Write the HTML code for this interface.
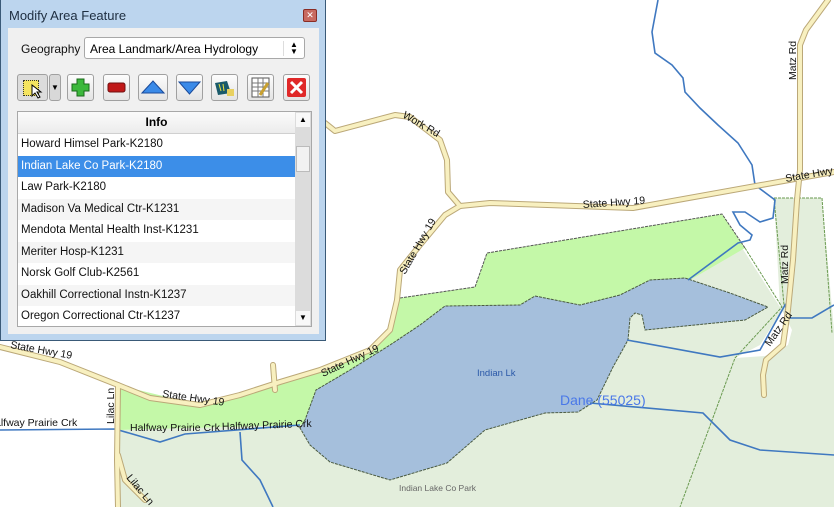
<!DOCTYPE html>
<html><head><meta charset="utf-8"><style>
body{margin:0;width:834px;height:507px;overflow:hidden;background:#fff;position:relative;font-family:"Liberation Sans",sans-serif}
svg.map{position:absolute;left:0;top:0}
.dlg{position:absolute;left:0;top:0;width:324px;height:340px;background:#bcd5ee;border:1px solid #3a5a78;border-top:none;box-sizing:content-box}
.title{position:absolute;left:8px;top:8px;font-size:13px;color:#1e2e40}
.close{position:absolute;left:302px;top:9px;width:12px;height:11px;background:#c86a60;border:1px solid #8a2c24;border-radius:2px;color:#fff;font-size:9px;line-height:11px;text-align:center}
.panel{position:absolute;left:7px;top:28px;width:311px;height:306px;background:#f0f0f0}
.lbl{position:absolute;left:13px;top:14px;font-size:12px;color:#111}
.combo{position:absolute;left:76px;top:9px;width:221px;height:22px;background:#fff;border:1px solid #a8a8a8;border-radius:3px;font-size:12px;line-height:22px;padding-left:5px;box-sizing:border-box}
.combo .ar{position:absolute;right:0;top:3px;width:20px;height:15px;border-left:1px solid #ddd;font-size:8px;line-height:7px;text-align:center}
.btn{position:absolute;top:46px;height:27px;width:27px;background:linear-gradient(#fdfdfd,#e4e4e4);border:1px solid #a0a0a0;border-radius:3px;box-sizing:border-box}
.table{position:absolute;left:9px;top:83px;width:295px;height:216px;background:#fff;border:1px solid #a8a8a8;box-sizing:border-box}
.hdr{position:absolute;left:0;top:0;width:277px;height:21px;background:linear-gradient(#fbfbfb,#ececec);border-bottom:1px solid #d0d0d0;font-size:12px;font-weight:bold;text-align:center;line-height:21px}
.row{position:absolute;left:0;width:277px;height:21.5px;font-size:11.5px;line-height:21px;padding-left:3px;box-sizing:border-box;color:#111}
.sb{position:absolute;left:277px;top:0;width:16px;height:214px;background:#dcdcdc}
</style></head><body>
<svg class="map" width="834" height="507" viewBox="0 0 834 507">
<polygon points="118,430 300,425 737,240 780,307 774,198 822,198 834,330 834,507 118,507" fill="#e3eedc"/>
<polygon points="782,310 792,330 788,345 765,356 735,358 760,345" fill="#fff"/>
<polygon points="400,298 475,287 487,253 722,214 745,248 690,280 300,425 118,430 118,385 200,405 280,382 370,350 392,325" fill="#c4f8a8"/>
<polyline points="400,298 475,287 487,253 722,214 745,248" fill="none" stroke="#555" stroke-width="1" stroke-dasharray="3,1"/>
<polygon points="300,428 305,420 316,390 350,370 390,345 420,325 445,306 520,305 535,296 555,300 580,305 620,295 650,280 685,278 730,293 768,307 745,320 645,330 642,315 635,313 630,318 628,340 613,367 597,400 578,412 545,413 485,430 447,463 390,480 330,462 310,445" fill="#a5bfdc" stroke="#4a5a40" stroke-width="1" stroke-dasharray="3,1"/>
<polyline points="745,248 782,307 735,358 680,507" fill="none" stroke="#6a9a50" stroke-width="1" stroke-dasharray="3,1"/>
<polyline points="774,198 822,198 832,333" fill="none" stroke="#6a9a50" stroke-width="1" stroke-dasharray="3,1"/>
<line x1="774" y1="198" x2="784" y2="305" stroke="#6a9a50" stroke-width="1" stroke-dasharray="3,1"/>
<g fill="none" stroke="#3f78c0" stroke-width="1.6">
<polyline points="658,0 652,32 655,53 672,65 683,78 685,92 700,108 718,125 738,143 752,165 755,185 775,200 773,218 760,222 745,212 733,212 740,225 752,235 750,240 738,243 688,280"/>
<polyline points="627,340 720,357 760,350 785,305 790,318 790,318"/>
<polyline points="785,318 812,318 834,305"/>
<polyline points="590,403 703,413 730,440 760,450 834,455"/>
<polyline points="0,430 115,429 160,442 185,434 300,425"/>
<polyline points="240,432 242,460 260,480 273,507"/>
</g>
<g fill="none" stroke-linecap="round" stroke-linejoin="round">
<g stroke="#bba878" stroke-width="6">
<polyline points="325,123 335,131 395,115 410,117 440,140 447,160 448,192 460,206"/>
<polyline points="460,206 490,203 633,208 834,172"/>
<polyline points="460,206 445,215 420,245 400,270 397,300 390,330 370,350 320,370 280,382 240,395 200,405 150,398 118,385 60,362 0,347"/>
<polyline points="828,0 806,30 800,45 800,170 797,200 793,260 788,310 783,345 766,360 763,375 764,395"/>
<polyline points="118,385 117,460 118,507"/>
<polyline points="118,455 125,480 145,500"/>
<polyline points="273,365 275,390"/>
</g>
<g stroke="#f8f0c0" stroke-width="4">
<polyline points="325,123 335,131 395,115 410,117 440,140 447,160 448,192 460,206"/>
<polyline points="460,206 490,203 633,208 834,172"/>
<polyline points="460,206 445,215 420,245 400,270 397,300 390,330 370,350 320,370 280,382 240,395 200,405 150,398 118,385 60,362 0,347"/>
<polyline points="828,0 806,30 800,45 800,170 797,200 793,260 788,310 783,345 766,360 763,375 764,395"/>
<polyline points="118,385 117,460 118,507"/>
<polyline points="118,455 125,480 145,500"/>
<polyline points="273,365 275,390"/>
</g></g>
<g font-family="Liberation Sans, sans-serif" font-size="10.5" fill="#111">
<text x="402" y="117" transform="rotate(30 402 117)">Work Rd</text>
<text x="583" y="208" transform="rotate(-4 583 208)">State Hwy  19</text>
<text x="786" y="182" transform="rotate(-10 786 182)">State Hwy</text>
<text x="405" y="275" transform="rotate(-60 405 275)">State Hwy  19</text>
<text x="323" y="377" transform="rotate(-25 323 377)">State Hwy  19</text>
<text x="162" y="397" transform="rotate(8 162 397)">State Hwy  19</text>
<text x="10" y="348" transform="rotate(10 10 348)">State Hwy  19</text>
<text x="796" y="80" transform="rotate(-90 796 80)">Matz Rd</text>
<text x="788" y="284" transform="rotate(-90 788 284)">Matz Rd</text>
<text x="770" y="347" transform="rotate(-55 770 347)">Matz Rd</text>
<text x="114" y="424" transform="rotate(-90 114 424)">Lilac Ln</text>
<text x="126" y="478" transform="rotate(50 126 478)">Lilac Ln</text>
<text x="-5" y="426">alfway  Prairie Crk</text>
<text x="130" y="431">Halfway  Prairie Crk</text>
<text x="222" y="430" transform="rotate(-2 222 430)">Halfway  Prairie Crk</text>
<text x="477" y="376" font-size="9.5" fill="#2a58a8">Indian Lk</text>
<text x="399" y="491" font-size="8.5" fill="#666">Indian Lake Co Park</text>
<text x="560" y="405" font-size="14" fill="#4a78e8">Dane (55025)</text>
</g>
</svg>
<div class="dlg">
<div class="title">Modify Area Feature</div>
<div class="close">✕</div>
<div class="panel">
<div class="lbl">Geography</div>
<div class="combo">Area Landmark/Area Hydrology<div class="ar">▲<br>▼</div></div>
<div class="btn" style="left:9px;width:31px;background:#dcdcdc"><div style="position:absolute;left:5px;top:5px;width:14px;height:14px;background:#f4e460;border:1px dotted #333"></div><svg style="position:absolute;left:13px;top:9px" width="12" height="15"><path d="M1 1 L1 12 L4 9 L7 14 L9 13 L6 8 L10 8 Z" fill="#fff" stroke="#000" stroke-width="1"/></svg></div>
<div class="btn" style="left:41px;width:12px;background:#d8d8d8;font-size:8px;text-align:center;line-height:25px">▼</div>
<div class="btn" style="left:59px"><svg width="25" height="25"><path d="M9 4h7v5h5v7h-5v5h-7v-5h-5v-7h5z" fill="#3cb83c" stroke="#1a6a1a"/></svg></div>
<div class="btn" style="left:95px"><svg width="25" height="25"><rect x="4" y="8" width="17" height="9" rx="2" fill="#c01818" stroke="#701010"/></svg></div>
<div class="btn" style="left:130px;width:30px"><svg width="28" height="25"><path d="M3 18 L14 6 L25 18 Z" fill="#3a8ae8" stroke="#1a4a9a"/></svg></div>
<div class="btn" style="left:168px"><svg width="25" height="25"><path d="M2 7 L23 7 L12.5 19 Z" fill="#3a8ae8" stroke="#1a4a9a"/></svg></div>
<div class="btn" style="left:203px"><svg width="25" height="25"><path d="M3 8 L15 6 L19 18 L6 20 Z" fill="#1a5a6a"/><path d="M7 9 L9 16 M11 9 L12 16" stroke="#e8e040"/><rect x="15" y="14" width="7" height="7" fill="#e8d060"/></svg></div>
<div class="btn" style="left:239px"><svg width="25" height="25"><rect x="4" y="3" width="17" height="19" fill="#fff" stroke="#555"/><path d="M4 8h17M4 12h17M4 16h17M10 3v19M15 3v19" stroke="#777"/><path d="M12 20 L20 8" stroke="#c8a030" stroke-width="3"/></svg></div>
<div class="btn" style="left:275px"><svg width="25" height="25"><rect x="3" y="3" width="19" height="19" rx="2" fill="#e02828"/><path d="M7 7 L18 18 M18 7 L7 18" stroke="#fff" stroke-width="3"/></svg></div>
<div class="table">
<div class="hdr">Info</div>
<div class="row" style="top:22px">Howard Himsel Park-K2180</div>
<div class="row" style="top:43.5px;background:#3c8ee8;color:#fff">Indian Lake Co Park-K2180</div>
<div class="row" style="top:65px">Law Park-K2180</div>
<div class="row" style="top:86.5px;background:#f5f5f5">Madison Va Medical Ctr-K1231</div>
<div class="row" style="top:108px">Mendota Mental Health Inst-K1231</div>
<div class="row" style="top:129.5px;background:#f5f5f5">Meriter Hosp-K1231</div>
<div class="row" style="top:151px">Norsk Golf Club-K2561</div>
<div class="row" style="top:172.5px;background:#f5f5f5">Oakhill Correctional Instn-K1237</div>
<div class="row" style="top:194px">Oregon Correctional Ctr-K1237</div>
<div class="sb"><div style="position:absolute;left:1px;top:1px;width:14px;height:14px;background:#f8f8f8;font-size:8px;text-align:center;line-height:14px">▲</div><div style="position:absolute;left:1px;top:34px;width:14px;height:26px;background:#f2f2f2;border:1px solid #bbb;box-sizing:border-box"></div><div style="position:absolute;left:1px;top:199px;width:14px;height:14px;background:#f8f8f8;font-size:8px;text-align:center;line-height:14px">▼</div></div>
</div>
</div>
</div>
</body></html>
